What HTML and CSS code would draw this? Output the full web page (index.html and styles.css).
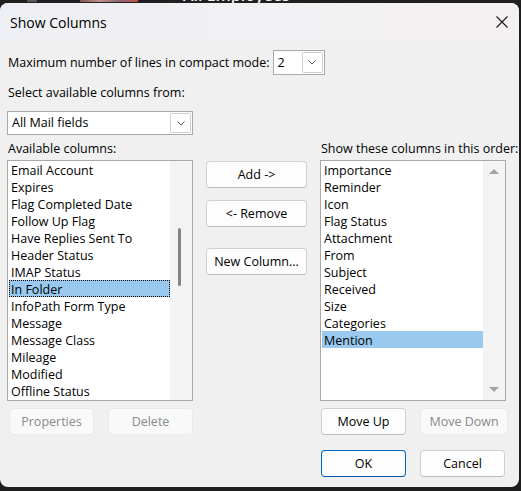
FILE: index.html
```html
<!DOCTYPE html>
<html lang="en">

<head>
  <meta charset="UTF-8">
  <meta name="viewport" content="width=device-width, initial-scale=1.0">
  <title>Show Columns</title>
  <link rel="stylesheet" href="styles.css">
</head>

<body>

  <!-- mail window behind the dialog -->
  <div class="backdrop">
    <span class="backdrop-icon"></span>
    <span class="backdrop-photo"></span>
    <span class="backdrop-title">All Employees</span>
  </div>

  <div class="dialog">
    <div class="titlebar">
      <span class="title">Show Columns</span>
      <svg class="close" width="12" height="12" viewBox="0 0 12 12">
        <path d="M0.5 0.5 L11.5 11.5 M11.5 0.5 L0.5 11.5" stroke="#1a1a1a" stroke-width="1.1" fill="none" />
      </svg>
    </div>

    <div class="content">
      <div class="lines-row">
        <span class="text">Maximum number of lines in compact mode:</span>
        <div class="combo combo-lines">
          <span class="combo-value">2</span>
          <span class="combo-drop">
            <svg width="8" height="5" viewBox="0 0 8 5">
              <path d="M0.5 0.5 L4 4 L7.5 0.5" stroke="#555" stroke-width="1" fill="none" />
            </svg>
          </span>
        </div>
      </div>

      <div class="text select-label">Select available columns from:</div>
      <div class="combo combo-fields">
        <span class="combo-value">All Mail fields</span>
        <span class="combo-drop">
          <svg width="8" height="5" viewBox="0 0 8 5">
            <path d="M0.5 0.5 L4 4 L7.5 0.5" stroke="#555" stroke-width="1" fill="none" />
          </svg>
        </span>
      </div>

      <div class="columns">
        <div class="col">
          <div class="text col-label">Available columns:</div>
          <div class="listbox">
            <ul class="items">
              <li>Email Account</li>
              <li>Expires</li>
              <li>Flag Completed Date</li>
              <li>Follow Up Flag</li>
              <li>Have Replies Sent To</li>
              <li>Header Status</li>
              <li>IMAP Status</li>
              <li class="selected focused">In Folder</li>
              <li>InfoPath Form Type</li>
              <li>Message</li>
              <li>Message Class</li>
              <li>Mileage</li>
              <li>Modified</li>
              <li>Offline Status</li>
            </ul>
            <div class="scroll">
              <div class="thumb"></div>
            </div>
          </div>
          <div class="btn-row btn-row-left">
            <button class="btn" disabled>Properties</button>
            <button class="btn" disabled>Delete</button>
          </div>
        </div>

        <div class="col middle">
          <button class="btn">Add -&gt;</button>
          <button class="btn">&lt;- Remove</button>
          <button class="btn btn-new">New Column...</button>
        </div>

        <div class="col">
          <div class="text col-label nowrap">Show these columns in this order:</div>
          <div class="listbox">
            <ul class="items">
              <li>Importance</li>
              <li>Reminder</li>
              <li>Icon</li>
              <li>Flag Status</li>
              <li>Attachment</li>
              <li>From</li>
              <li>Subject</li>
              <li>Received</li>
              <li>Size</li>
              <li>Categories</li>
              <li class="selected">Mention</li>
            </ul>
            <div class="scroll scroll-arrows">
              <span class="arrow-up"></span>
              <span class="arrow-down"></span>
            </div>
          </div>
          <div class="btn-row btn-row-right">
            <button class="btn btn-up">Move Up</button>
            <button class="btn btn-down" disabled>Move Down</button>
          </div>
          <div class="btn-row btn-row-footer">
            <button class="btn btn-ok">OK</button>
            <button class="btn btn-cancel">Cancel</button>
          </div>
        </div>
      </div>
    </div>
  </div>

</body>

</html>
```

FILE: styles.css
```css
* {
  padding: 0;
  margin: 0;
  box-sizing: border-box;
}

body {
  width: 521px;
  height: 491px;
  overflow: hidden;
  background-color: #1e1e1e;
  font-family: 'Open Sans', 'Noto Sans', sans-serif;
  font-size: 12.5px;
  color: #000;
}

/* window behind */
.backdrop {
  height: 3px;
  position: relative;
  overflow: hidden;
  background-color: #202020;
}

.backdrop-icon {
  position: absolute;
  left: 27px;
  top: -6px;
  width: 10px;
  height: 8px;
  background-color: #5a5a5a;
}

.backdrop-photo {
  position: absolute;
  left: 80px;
  top: -10px;
  width: 58px;
  height: 12px;
  background: linear-gradient(90deg, #7a5a4a, #c98a8a, #8a6a7a, #c05040);
}

.backdrop-title {
  position: absolute;
  left: 183px;
  top: -16px;
  font-size: 16px;
  line-height: 23px;
  font-weight: 600;
  color: #f0f0f0;
}

.dialog {
  width: 519px;
  height: 484px;
  border-radius: 8px;
  overflow: hidden;
  background-color: #f0f0f0;
}

.titlebar {
  height: 38px;
  display: flex;
  align-items: center;
  justify-content: space-between;
  padding: 0 11px 0 10px;
  background: linear-gradient(90deg, #eeeff4, #f2f1f3 60%, #f4f0f0);
}

.title {
  font-size: 14px;
  line-height: 20px;
  padding-top: 1px;
}

.close {
  display: block;
  margin-bottom: 1px;
}

.content {
  padding: 9px 0 0 7px;
}

.text {
  line-height: 16px;
  padding-left: 1px;
}

.nowrap {
  white-space: nowrap;
}

.lines-row {
  display: flex;
  align-items: center;
  gap: 3px;
}

.select-label {
  margin-top: 10px;
}

.col-label {
  padding-top: 2px;
}

/* combo boxes */
.combo {
  display: flex;
  align-items: center;
  justify-content: space-between;
  background-color: #fff;
  border: 1px solid #a9a9a9;
  padding: 1px;
}

.combo-lines {
  width: 52px;
  height: 25px;
}

.combo-fields {
  width: 186px;
  height: 24px;
  margin-top: 10px;
}

.combo-value {
  padding-left: 3px;
  line-height: 18px;
}

.combo-drop {
  width: 21px;
  height: 100%;
  display: flex;
  align-items: center;
  justify-content: center;
  border: 1px solid #cfcfcf;
  border-radius: 2px;
  background-color: #fff;
}

.combo-drop svg {
  display: block;
}

/* three column area */
.columns {
  display: grid;
  grid-template-columns: 186px 101px 188px;
  column-gap: 13px;
  margin-top: 4px;
}

.listbox {
  display: flex;
  height: 241px;
  width: 186px;
  margin-top: 3px;
  background-color: #fff;
  border: 1px solid #a9a9a9;
  overflow: hidden;
}

.items {
  list-style: none;
  width: 162px;
  padding-left: 1px;
}

.items li {
  height: 17px;
  line-height: 20px;
  padding-left: 2px;
  white-space: nowrap;
}

.items li.selected {
  background-color: #99c9ef;
}

.items li.focused {
  outline: 1px dotted #000;
  outline-offset: -1px;
}

.scroll {
  flex: 1;
  position: relative;
  background-color: #f3f3f3;
}

.thumb {
  position: absolute;
  left: 8px;
  top: 67px;
  width: 3px;
  height: 58px;
  border-radius: 2px;
  background-color: #858585;
}

.scroll-arrows {
  display: flex;
  flex-direction: column;
  justify-content: space-between;
  align-items: center;
  padding: 8px 0 8px 0;
}

.arrow-up,
.arrow-down {
  width: 0;
  height: 0;
  border-left: 5px solid transparent;
  border-right: 5px solid transparent;
}

.arrow-up {
  border-bottom: 5px solid #a3a3a3;
}

.arrow-down {
  border-top: 5px solid #a3a3a3;
}

/* buttons */
.btn {
  display: block;
  height: 27px;
  font-family: inherit;
  font-size: 12.5px;
  color: #000;
  background-color: #fdfdfd;
  border: 1px solid #d0d0d0;
  border-bottom-color: #bcbcbc;
  border-radius: 4px;
}

.btn:disabled {
  color: #8a8a8a;
  background-color: #f9f9f9;
  border-color: #e9e9e9;
}

.middle {
  display: flex;
  flex-direction: column;
  padding-top: 22px;
}

.middle .btn {
  width: 101px;
  margin-bottom: 12px;
}

.middle .btn-new {
  margin-top: 9px;
}

.btn-row {
  display: flex;
  margin-top: 7px;
}

.btn-row-left {
  padding-left: 2px;
  gap: 14px;
}

.btn-row-left .btn {
  width: 85px;
}

.btn-row-right,
.btn-row-footer {
  padding-left: 1px;
  gap: 14px;
}

.btn-up,
.btn-ok {
  width: 85px;
}

.btn-down {
  width: 88px;
}

.btn-cancel {
  width: 85px;
}

.btn-row-footer {
  margin-top: 15px;
}

.btn-ok {
  border-color: #0067c0;
  border-bottom-color: #0057a8;
}
```
